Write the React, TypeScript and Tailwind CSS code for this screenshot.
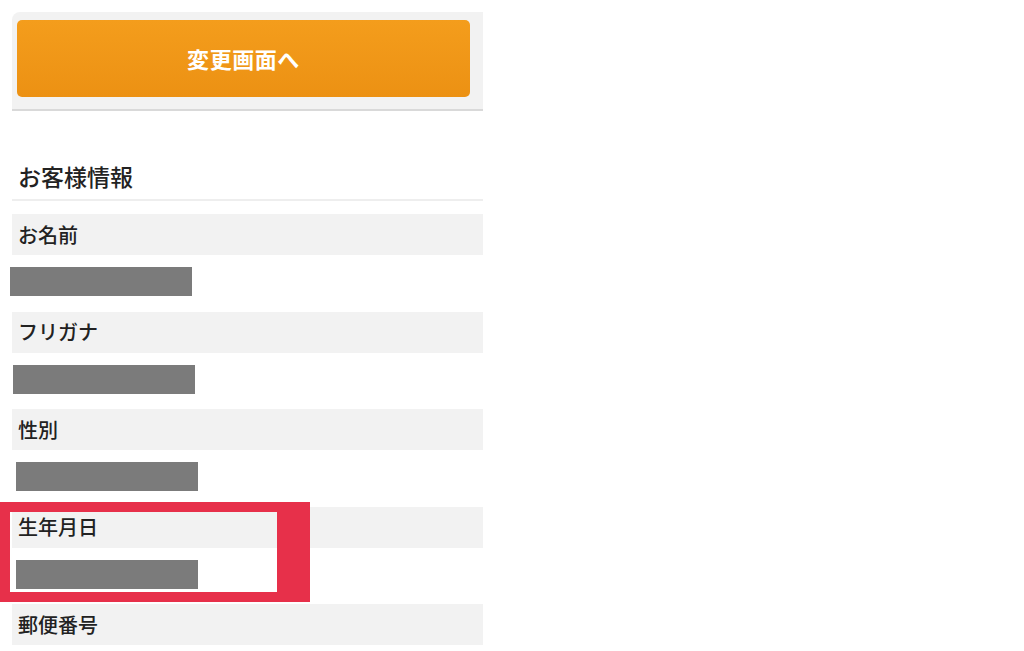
const fields = [
  { label: 'お名前', shift: 'ml-[-2px]' },
  { label: 'フリガナ', shift: 'ml-px' },
  { label: '性別', shift: 'ml-1' },
  { label: '生年月日', shift: 'ml-1' },
  { label: '郵便番号', shift: 'ml-1' },
];

export default function App() {
  return (
    <div
      className="relative w-[1024px] h-[651px] overflow-hidden bg-white text-[#222]"
      style={{ fontFamily: '"Noto Sans CJK JP", "Noto Sans", sans-serif' }}
    >
      <div className="ml-3 w-[471px] pt-3">
        {/* Change button panel */}
        <div className="bg-[#f2f2f2] rounded-tl-lg border-b-2 border-[#d9d9d9] pt-2 pb-3 pl-[5px] pr-[13px]">
          <button className="w-full h-[77px] rounded-[5px] bg-gradient-to-b from-[#f49d1c] to-[#ec9113] text-white text-[22px] font-bold tracking-wide">
            変更画面へ
          </button>
        </div>

        {/* Customer info */}
        <h2 className="mt-[50px] pl-[6px] text-[23px] leading-[30px] font-medium">お客様情報</h2>
        <div className="mt-[8px] h-[2px] bg-[#eeeeee]" />

        <div className="mt-[13px]">
          {fields.map((f) => (
            <div key={f.label}>
              <div className="h-[41px] bg-[#f2f2f2] flex items-center pl-[6px] text-[20px] font-medium">
                {f.label}
              </div>
              <div className={`${f.shift} mt-3 mb-[15.5px] w-[182px] h-[29px] bg-[#7b7b7b]`} />
            </div>
          ))}
        </div>
      </div>

      {/* Highlight annotation */}
      <div className="absolute left-0 top-[502px] w-[310px] h-[100px] border-[#e7304a] border-l-[10px] border-t-[10px] border-b-[10px] border-r-[33px]" />
    </div>
  );
}
